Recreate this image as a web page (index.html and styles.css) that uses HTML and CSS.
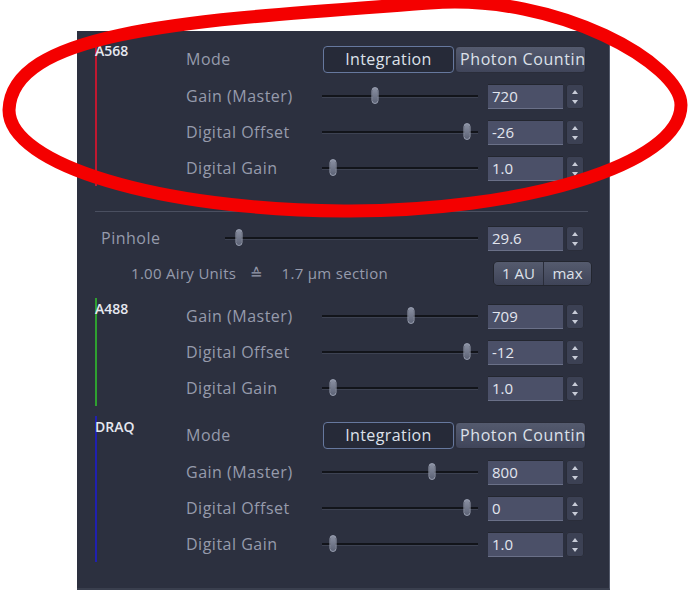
FILE: index.html
```html
<!DOCTYPE html>
<html lang="en">
<head>
    <meta charset="UTF-8">
    <title>Detector settings</title>
    <link rel="stylesheet" href="styles.css">
</head>
<body>
    <div class="stage">
        <div class="panel">
            <section class="channel ch-red">
                <div class="tag"><span>A568</span></div>
                <div class="rows">
                    <div class="row row-mode">
                        <span class="lbl">Mode</span>
                        <div class="seg">
                            <button class="on">Integration</button>
                            <button class="off">Photon Counting</button>
                        </div>
                    </div>
                    <div class="row">
                        <span class="lbl">Gain (Master)</span>
                        <div class="slider"><i class="thumb" style="left:34%"></i></div>
                        <div class="spin"><span class="val">720</span><span class="arrows"></span></div>
                    </div>
                    <div class="row">
                        <span class="lbl">Digital Offset</span>
                        <div class="slider"><i class="thumb" style="left:93%"></i></div>
                        <div class="spin"><span class="val">-26</span><span class="arrows"></span></div>
                    </div>
                    <div class="row">
                        <span class="lbl">Digital Gain</span>
                        <div class="slider"><i class="thumb" style="left:7%"></i></div>
                        <div class="spin"><span class="val">1.0</span><span class="arrows"></span></div>
                    </div>
                </div>
            </section>

            <div class="sep"></div>

            <div class="pin-row">
                <span class="lbl">Pinhole</span>
                <div class="slider wide"><i class="thumb" style="left:5.5%"></i></div>
                <div class="spin"><span class="val">29.6</span><span class="arrows"></span></div>
            </div>
            <div class="airy-row">
                <span class="airy">1.00 Airy Units<span class="eq">&#8793;</span>1.7 µm section</span>
                <div class="au">
                    <button>1 AU</button>
                    <button>max</button>
                </div>
            </div>

            <section class="channel ch-green">
                <div class="tag"><span>A488</span></div>
                <div class="rows">
                    <div class="row">
                        <span class="lbl">Gain (Master)</span>
                        <div class="slider"><i class="thumb" style="left:57%"></i></div>
                        <div class="spin"><span class="val">709</span><span class="arrows"></span></div>
                    </div>
                    <div class="row">
                        <span class="lbl">Digital Offset</span>
                        <div class="slider"><i class="thumb" style="left:93%"></i></div>
                        <div class="spin"><span class="val">-12</span><span class="arrows"></span></div>
                    </div>
                    <div class="row">
                        <span class="lbl">Digital Gain</span>
                        <div class="slider"><i class="thumb" style="left:7%"></i></div>
                        <div class="spin"><span class="val">1.0</span><span class="arrows"></span></div>
                    </div>
                </div>
            </section>

            <section class="channel ch-blue">
                <div class="tag"><span>DRAQ</span></div>
                <div class="rows">
                    <div class="row row-mode">
                        <span class="lbl">Mode</span>
                        <div class="seg">
                            <button class="on">Integration</button>
                            <button class="off">Photon Counting</button>
                        </div>
                    </div>
                    <div class="row">
                        <span class="lbl">Gain (Master)</span>
                        <div class="slider"><i class="thumb" style="left:70.5%"></i></div>
                        <div class="spin"><span class="val">800</span><span class="arrows"></span></div>
                    </div>
                    <div class="row">
                        <span class="lbl">Digital Offset</span>
                        <div class="slider"><i class="thumb" style="left:93%"></i></div>
                        <div class="spin"><span class="val">0</span><span class="arrows"></span></div>
                    </div>
                    <div class="row">
                        <span class="lbl">Digital Gain</span>
                        <div class="slider"><i class="thumb" style="left:7%"></i></div>
                        <div class="spin"><span class="val">1.0</span><span class="arrows"></span></div>
                    </div>
                </div>
            </section>
        </div>

        <!-- hand drawn annotation over the first channel -->
        <svg class="ring" width="688" height="230" viewBox="0 0 688 230">
            <path d="M9,110 C12,28 200,20 430,3 C560,-7 681,65 681,105 C681,165 520,212 344,211 C160,210 9,165 9,110 Z" fill="none" stroke="#f40000" stroke-width="13"/>
        </svg>
    </div>
</body>
</html>
```

FILE: styles.css
```css
body {
    margin: 0;
    background: #ffffff;
    font-family: "Open Sans", "Noto Sans", sans-serif;
}
.stage {
    position: relative;
    width: 688px;
    height: 593px;
    overflow: hidden;
}
.panel {
    margin: 31px 0 0 77px;
    width: 533px;
    height: 559px;
    box-sizing: border-box;
    padding: 9px 0 0 18px;
    background: #2c303f;
    border-right: 1px solid #555b6c;
    border-bottom: 2px solid #3a3f4e;
}
.channel {
    display: flex;
}
.tag {
    width: 89px;
    border-left: 2px solid;
}
.tag span {
    display: block;
    margin: 1px 0 0 -2px;
    font-size: 14px;
    line-height: 19px;
    font-weight: 600;
    color: #e6e8f0;
}
.ch-red .tag { border-color: #c01830; }
.ch-green .tag { border-color: #2fa030; }
.ch-blue .tag { border-color: #2020b0; }
.ch-green { margin-top: 8px; }
.ch-blue { margin-top: 10px; }

.row {
    display: flex;
    align-items: center;
    height: 36px;
}
.row-mode {
    height: 38px;
}
.lbl {
    width: 136px;
    font-size: 16px;
    color: #969bac;
    letter-spacing: 0.5px;
}
.slider {
    position: relative;
    width: 156px;
    height: 2px;
    margin-right: 10px;
    background: #12141a;
    box-shadow: 0 1px 0 #3d4252;
}
.slider.wide {
    width: 253px;
}
.thumb {
    position: absolute;
    top: -8px;
    width: 7px;
    height: 17px;
    transform: translateX(-50%);
    border-radius: 4px;
    background: linear-gradient(#8a90a2, #5d6376);
    border: 1px solid #9aa0b2;
    box-sizing: border-box;
}
.spin {
    display: flex;
    align-items: stretch;
    height: 25px;
}
.val {
    width: 75px;
    box-sizing: border-box;
    padding: 1px 0 0 4px;
    font-size: 15px;
    color: #e2e5ee;
    background: #4b5068;
    border-top: 1px solid #23262f;
    border-bottom: 1px solid #6a7088;
}
.arrows {
    position: relative;
    width: 18px;
    margin-left: 3px;
    border-radius: 3px;
    background: #3c4154;
    box-shadow: inset 0 0 0 1px #2a2d3a;
}
.arrows::before,
.arrows::after {
    content: "";
    position: absolute;
    left: 6px;
    border-left: 3px solid transparent;
    border-right: 3px solid transparent;
}
.arrows::before {
    top: 6px;
    border-bottom: 4px solid #c8ccd8;
}
.arrows::after {
    bottom: 5px;
    border-top: 4px solid #c8ccd8;
}

.seg {
    display: flex;
    width: 264px;
    height: 27px;
}
.seg button {
    font-family: inherit;
    font-size: 16px;
    letter-spacing: 0.4px;
    color: #dde1ea;
    padding: 0;
    border-radius: 4px;
    white-space: nowrap;
    overflow: hidden;
}
.seg .on {
    width: 131px;
    margin-left: 1px;
    background: #262a38;
    border: 1px solid #66789e;
}
.seg .off {
    width: 131px;
    margin-left: 1px;
    text-align: left;
    padding-left: 4px;
    letter-spacing: 0.6px;
    background: linear-gradient(#545a6e, #40455a);
    border: 1px solid #2a2d3a;
}

.sep {
    height: 1px;
    margin: 25px 21px 0 0;
    background: #4a4f60;
}
.pin-row {
    display: flex;
    align-items: center;
    height: 36px;
    margin-top: 8px;
}
.pin-row .lbl {
    width: 124px;
    padding-left: 6px;
}
.airy-row {
    display: flex;
    align-items: center;
    height: 34px;
}
.airy {
    width: 362px;
    padding-left: 36px;
    font-size: 15px;
    letter-spacing: 0.3px;
    color: #969bac;
    white-space: nowrap;
}
.eq {
    margin: 0 18px 0 14px;
}
.au {
    display: flex;
    height: 23px;
    border-radius: 5px;
    overflow: hidden;
    border: 1px solid #23262f;
}
.au button {
    font-family: inherit;
    font-size: 15px;
    color: #dde1ea;
    border: none;
    padding: 0;
    background: linear-gradient(#555b6e, #3f4458);
}
.au button:first-child {
    width: 50px;
    border-right: 1px solid #2a2d3a;
}
.au button:last-child {
    width: 47px;
}

.ring {
    position: absolute;
    left: 0;
    top: 0;
}
```
